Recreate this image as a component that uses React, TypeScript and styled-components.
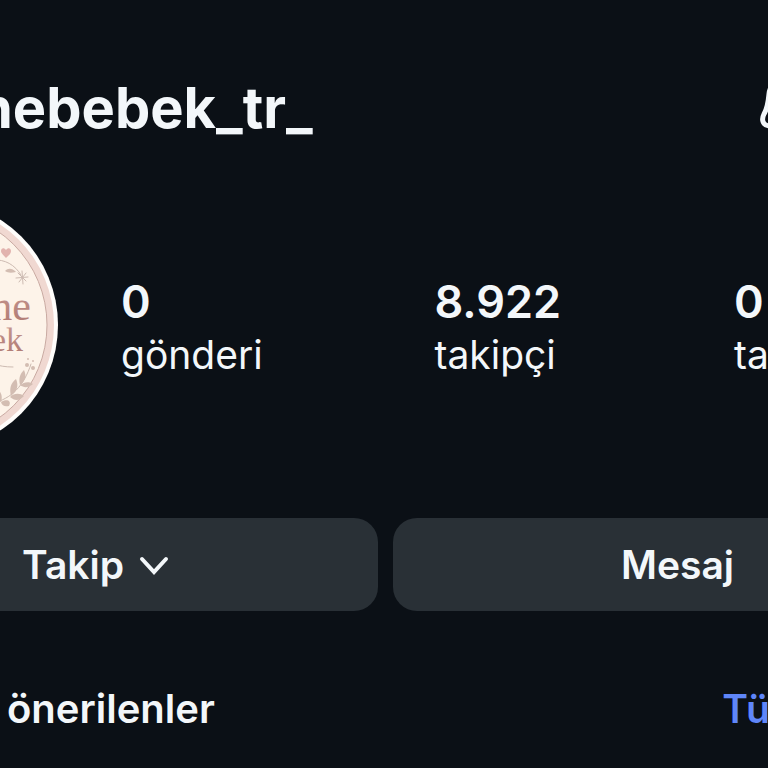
import React, { FC } from "react";
import styled, { createGlobalStyle } from "styled-components";

const TEXT = "#f3f7fa";

const GlobalStyle = createGlobalStyle`
  * {
    box-sizing: border-box;
  }

  body {
    margin: 0;
    background: #0b1016;
    color: ${TEXT};
    font-family: Inter, "Liberation Sans", sans-serif;
  }
`;

const Page = styled.main`
  min-height: 100vh;
  overflow: hidden;
`;

const Header = styled.header`
  display: flex;
  align-items: center;
  justify-content: space-between;
  padding-top: 72px;
`;

const Username = styled.h1`
  margin: 0 0 0 -22px;
  font-size: 56px;
  font-weight: 700;
  line-height: 72px;
`;

const BellButton = styled.button`
  flex: none;
  width: 64px;
  height: 64px;
  margin-right: -56px;
  padding: 0;
  border: 0;
  background: none;
  color: ${TEXT};

  svg {
    display: block;
  }
`;

const Profile = styled.section`
  display: flex;
  align-items: center;
  margin-top: 56px;
`;

const Avatar = styled.svg`
  flex: none;
  width: 250px;
  height: 250px;
  margin-left: -192px;
`;

const Stats = styled.dl`
  flex: 1;
  display: grid;
  grid-template-columns: 314fr 300fr 34fr;
  margin: 0;
  padding-top: 8px;
  padding-left: 63px;
`;

const Stat = styled.div`
  display: flex;
  flex-direction: column-reverse;
  min-width: 0;
`;

const StatLabel = styled.dt`
  font-size: 39px;
  line-height: 54px;
`;

const StatValue = styled.dd`
  margin: 0;
  font-size: 45px;
  font-weight: 600;
  line-height: 52px;
`;

const Actions = styled.div`
  display: grid;
  grid-template-columns: 378fr 375fr;
  gap: 15px;
  margin-top: 68px;
`;

const ActionButton = styled.button<{ $side: "left" | "right" }>`
  display: flex;
  align-items: center;
  justify-content: ${({ $side }) =>
    $side === "left" ? "flex-start" : "flex-end"};
  gap: 14px;
  height: 93px;
  padding: ${({ $side }) => ($side === "left" ? "0 22px" : "0 34px")};
  border: 0;
  border-radius: ${({ $side }) =>
    $side === "left" ? "0 24px 24px 0" : "24px 0 0 24px"};
  background: #293036;
  color: ${TEXT};
  font: inherit;
  font-size: 39px;
  font-weight: 600;
`;

const Suggestions = styled.section`
  display: flex;
  align-items: center;
  justify-content: space-between;
  margin-top: 72px;
  padding-left: 7px;
  line-height: 52px;
`;

const SuggestionsTitle = styled.h2`
  margin: 0;
  font-size: 40px;
  font-weight: 600;
`;

const SeeAll = styled.a`
  margin-right: -2px;
  color: #5f86f9;
  font-size: 39px;
  font-weight: 600;
  text-decoration: none;
`;

const BellIcon: FC = () => (
  <svg width="64" height="64" viewBox="0 0 64 64" fill="none" aria-hidden="true">
    <path
      d="M28 2C17 2 10 9 9 18C8 29 7 33 4 38C1 44 3 50 10 50H46C53 50 55 44 52 38C49 33 48 29 47 18C46 9 39 2 28 2Z"
      stroke="currentColor"
      strokeWidth="5"
    />
  </svg>
);

const ChevronIcon: FC = () => (
  <svg width="32" height="24" viewBox="0 0 32 24" fill="none" aria-hidden="true">
    <path
      d="M4 6L16 19L28 6"
      stroke="currentColor"
      strokeWidth="4"
      strokeLinecap="round"
    />
  </svg>
);

const Logo: FC = () => (
  <Avatar viewBox="0 0 250 250" role="img" aria-label="ne ek">
    <defs>
      <linearGradient id="rose" x1="0" y1="0" x2="0" y2="1">
        <stop offset="0" stopColor="#c99a92" />
        <stop offset="1" stopColor="#ad7771" />
      </linearGradient>
    </defs>
    <circle cx="125" cy="125" r="125" fill="#fffdfb" />
    <circle cx="125" cy="125" r="121" fill="#f0d8d1" />
    <circle cx="125" cy="125" r="114" fill="#fdf3e9" />
    <circle cx="125" cy="125" r="114" fill="none" stroke="#c9aaa2" />
    <path
      d="M198 58C195 55 193 53 193 51C193 48 196 47 198 50C200 47 203 48 203 51C203 54 200 56 198 58Z"
      fill="#e2b3ae"
    />
    <g fill="none" stroke="#cdbbb2" strokeLinecap="round">
      <path d="M185 60C197 59 207 65 213 75" />
      <path d="M210 73L218 81M218 73L211 82M214 71L215 84M208 78L220 77" />
      <path d="M185 164C192 166 197 167 205 167" />
      <path d="M185 203C203 199 216 186 223 164" />
    </g>
    <g fill="#d3bdb2">
      <path d="M197 71C200 68 204 68 208 72C203 73 200 73 197 71Z" />
      <path d="M193 202C184 197 186 193 187 187C193 191 195 196 193 202Z" />
      <path d="M203 196C201 188 203 183 208 179C211 186 209 191 203 196Z" />
      <path d="M212 185C210 177 213 173 216 170C219 177 217 181 212 185Z" />
      <path d="M193 202C198 199 204 200 201 206C197 207 194 206 193 202Z" />
      <path d="M202 197C206 193 212 193 216 196C211 201 207 201 202 197Z" />
      <path d="M212 185C216 182 221 181 225 184C220 188 216 188 212 185Z" />
      <circle cx="219" cy="165" r="2" />
      <circle cx="225" cy="161" r="1" />
      <circle cx="225" cy="168" r="2" />
      <circle cx="220" cy="159" r="1" />
    </g>
    <g
      fill="url(#rose)"
      fontFamily="'Liberation Serif', serif"
      textAnchor="end"
    >
      <text x="223" y="120" fontSize="42">
        ne
      </text>
      <text x="215" y="151" fontSize="34">
        ek
      </text>
    </g>
  </Avatar>
);

const STATS = [
  { value: "0", label: "gönderi" },
  { value: "8.922", label: "takipçi" },
  { value: "0", label: "ta" },
];

const App: FC = () => (
  <>
    <GlobalStyle />
    <Page>
      <Header>
        <Username>nebebek_tr_</Username>
        <BellButton type="button" aria-label="Bildirimler">
          <BellIcon />
        </BellButton>
      </Header>
      <Profile>
        <Logo />
        <Stats>
          {STATS.map(({ value, label }, index) => (
            <Stat key={index}>
              <StatLabel>{label}</StatLabel>
              <StatValue>{value}</StatValue>
            </Stat>
          ))}
        </Stats>
      </Profile>
      <Actions>
        <ActionButton type="button" $side="left">
          Takip
          <ChevronIcon />
        </ActionButton>
        <ActionButton type="button" $side="right">
          Mesaj
        </ActionButton>
      </Actions>
      <Suggestions>
        <SuggestionsTitle>önerilenler</SuggestionsTitle>
        <SeeAll href="#">Tü</SeeAll>
      </Suggestions>
    </Page>
  </>
);

export default App;
